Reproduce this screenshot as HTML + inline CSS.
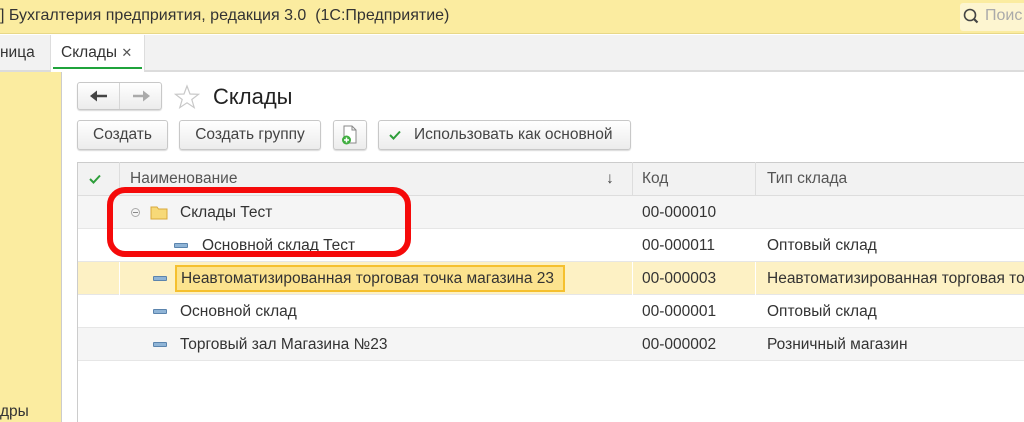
<!DOCTYPE html>
<html><head><meta charset="utf-8"><style>
*{margin:0;padding:0;box-sizing:border-box}
body{width:1024px;height:422px;overflow:hidden;background:#fff;font-family:"Liberation Sans","DejaVu Sans",sans-serif;font-size:15.5px;color:#333;position:relative}
.a{position:absolute}
.btn{position:absolute;height:30px;top:120px;border:1px solid #c8c8c8;border-radius:3px;background:linear-gradient(#fff,#ececec);box-shadow:0 1px 1px rgba(0,0,0,.15);font-size:15.5px;color:#444;line-height:28px;text-align:center}
.row{position:absolute;left:78px;width:946px;height:33px;border-bottom:1px solid #e6e6e6;line-height:33px}
.t{position:absolute;top:0;white-space:nowrap}
.ic{position:absolute;top:14px;width:14px;height:5px;background:#8fb4d6;border:1px solid #5b84ad;border-radius:1px}
</style></head><body>
<div class="a" style="left:0;top:0;width:1024px;height:34px;background:#fbeca0;border-bottom:1px solid #e8d888"></div>
<div class="a" style="left:0;top:7px;font-size:16px;color:#333;white-space:nowrap">] Бухгалтерия предприятия, редакция 3.0&nbsp; (1С:Предприятие)</div>
<div class="a" style="left:960px;top:3px;width:70px;height:28px;background:#fdf5d0;border-radius:3px"></div>
<svg class="a" style="left:963px;top:8px" width="16" height="18"><circle cx="7" cy="7" r="5.5" fill="none" stroke="#444" stroke-width="1.6"/><path d="M11 11 L14.5 14.5" stroke="#444" stroke-width="2.2"/></svg>
<div class="a" style="left:985px;top:7px;font-size:16px;color:#aaa">Поис</div>
<div class="a" style="left:0;top:35px;width:1024px;height:37px;background:#f2f2f2;border-bottom:2px solid #dcdcdc"></div>
<div class="a" style="left:0;top:44px">ница</div>
<div class="a" style="left:50px;top:35px;width:95px;height:37px;background:#fff;border-left:1px solid #ddd;border-right:1px solid #ddd"></div>
<div class="a" style="left:61px;top:44px;white-space:nowrap">Склады <span style="font-size:13px;font-weight:bold;color:#555">✕</span></div>
<div class="a" style="left:53px;top:67px;width:89px;height:2px;background:#1fa33b"></div>
<div class="a" style="left:0;top:72px;width:62px;height:350px;background:#fbeca0;border-right:1px solid #ccc"></div>
<div class="a" style="left:0;top:403px">дры</div>
<!-- nav -->
<div class="a" style="left:77px;top:82px;width:85px;height:28px;border:1px solid #c8c8c8;border-radius:3px;background:linear-gradient(#fff,#ececec);box-shadow:0 1px 1px rgba(0,0,0,.15)"></div>
<div class="a" style="left:119px;top:83px;width:1px;height:26px;background:#d6d6d6"></div>
<svg class="a" style="left:89px;top:89px" width="20" height="14"><path d="M18 7 H7" stroke="#444" stroke-width="2.5"/><path d="M1 7 L8 1.5 V12.5 Z" fill="#444"/></svg>
<svg class="a" style="left:131px;top:89px" width="20" height="14"><path d="M2 7 H13" stroke="#aaa" stroke-width="2.5"/><path d="M19 7 L12 1.5 V12.5 Z" fill="#aaa"/></svg>
<svg class="a" style="left:174px;top:84px" width="26" height="26"><path d="M13 2 L16 10 L24.5 10.3 L17.8 15.5 L20.2 23.6 L13 18.8 L5.8 23.6 L8.2 15.5 L1.5 10.3 L10 10 Z" fill="none" stroke="#c8c8c8" stroke-width="1.2"/></svg>
<div class="a" style="left:213px;top:84px;font-size:22px;color:#222">Склады</div>
<div class="btn" style="left:77px;width:91px">Создать</div>
<div class="btn" style="left:179px;width:142px">Создать группу</div>
<div class="btn" style="left:333px;width:34px"><svg width="20" height="22" style="margin-top:3px"><path d="M4 2 H12 L16 6 V19 H4 Z" fill="#fff" stroke="#888"/><path d="M12 2 V6 H16" fill="none" stroke="#888"/><circle cx="6.5" cy="16" r="4.5" fill="#3fae3f"/><path d="M6.5 13.5 V18.5 M4 16 H9" stroke="#fff" stroke-width="1.5"/></svg></div>
<div class="btn" style="left:378px;width:253px;text-align:left;padding-left:35px;white-space:nowrap">Использовать как основной</div>
<svg class="a" style="left:389px;top:130px" width="12" height="10"><path d="M1 5 L4.5 8.5 L11 1.5" fill="none" stroke="#2e9e3a" stroke-width="2"/></svg>
<!-- table -->
<div class="a" style="left:77px;top:162px;width:1px;height:260px;background:#ccc"></div>
<div class="a" style="left:78px;top:162px;width:946px;height:34px;background:#f2f2f2;border-top:1px solid #ccc;border-bottom:1px solid #ddd"></div>
<div class="a" style="left:119px;top:162px;width:1px;height:34px;background:#ddd"></div>
<div class="a" style="left:632px;top:162px;width:1px;height:34px;background:#ddd"></div>
<div class="a" style="left:755px;top:162px;width:1px;height:34px;background:#ddd"></div>
<svg class="a" style="left:89px;top:174px" width="12" height="10"><path d="M1 5 L4.5 8.5 L11 1.5" fill="none" stroke="#2e9e3a" stroke-width="2"/></svg>
<div class="a" style="left:130px;top:170px;color:#555">Наименование</div>
<div class="a" style="left:606px;top:170px;color:#444">↓</div>
<div class="a" style="left:642px;top:170px;color:#555">Код</div>
<div class="a" style="left:767px;top:170px;color:#555">Тип склада</div>

<div class="row" style="top:196px;background:#f5f5f5">
<div class="a" style="left:53px;top:12px;width:9px;height:9px;border:1px solid #aaa;border-radius:50%"></div><div class="a" style="left:55px;top:16px;width:5px;height:1px;background:#888"></div>
<svg class="a" style="left:72px;top:9px" width="18" height="15"><path d="M1 2 H7 L8.5 4 H17 V14 H1 Z" fill="#f7d978" stroke="#d9a93a"/></svg>
<div class="t" style="left:102px">Склады Тест</div><div class="t" style="left:564px">00-000010</div></div>
<div class="row" style="top:229px;background:#fff"><div class="ic" style="left:96px"></div><div class="t" style="left:124px">Основной склад Тест</div><div class="t" style="left:564px">00-000011</div><div class="t" style="left:689px">Оптовый склад</div></div>
<div class="row" style="top:262px;background:#fdf1c4"><div class="a" style="left:41px;top:0;width:1px;height:33px;background:#fff"></div><div class="a" style="left:554px;top:0;width:1px;height:33px;background:#fff"></div><div class="a" style="left:677px;top:0;width:1px;height:33px;background:#fff"></div><div class="ic" style="left:75px"></div><div class="a" style="left:97px;top:3px;width:390px;height:27px;background:#fce38e;border:2px solid #f5c02f"></div><div class="t" style="left:103px">Неавтоматизированная торговая точка магазина 23</div><div class="t" style="left:564px">00-000003</div><div class="t" style="left:689px">Неавтоматизированная торговая то</div></div>
<div class="row" style="top:295px;background:#fff"><div class="ic" style="left:75px"></div><div class="t" style="left:102px">Основной склад</div><div class="t" style="left:564px">00-000001</div><div class="t" style="left:689px">Оптовый склад</div></div>
<div class="row" style="top:328px;background:#f5f5f5"><div class="ic" style="left:75px"></div><div class="t" style="left:102px">Торговый зал Магазина №23</div><div class="t" style="left:564px">00-000002</div><div class="t" style="left:689px">Розничный магазин</div></div>
<div class="a" style="left:107px;top:187px;width:304px;height:70px;border:6px solid #f50a0a;border-radius:18px"></div>
</body></html>
